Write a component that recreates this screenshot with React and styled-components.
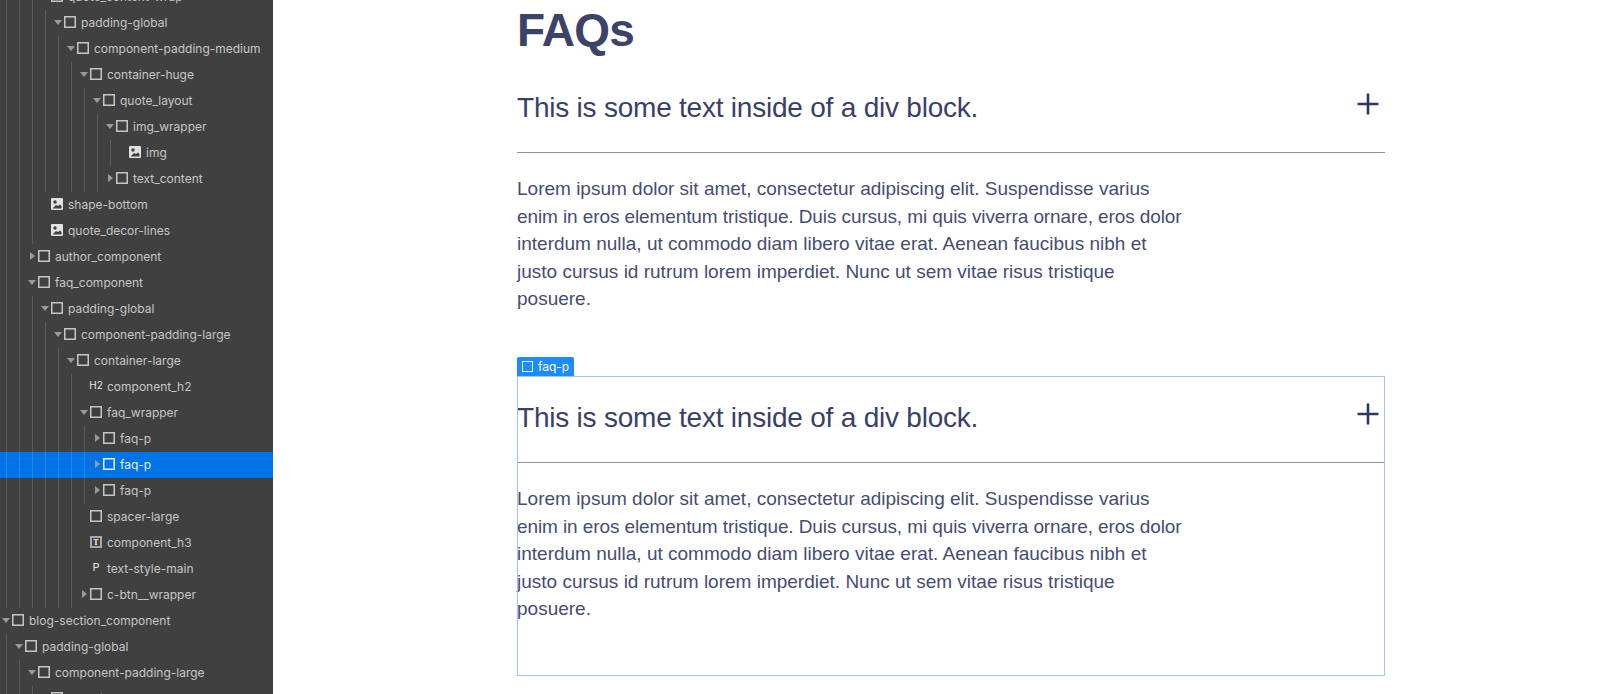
import React from 'react';
import styled, { createGlobalStyle } from 'styled-components';

const GlobalStyle = createGlobalStyle`
  html, body {
    margin: 0;
    height: 100%;
    overflow: hidden;
    background: #fff;
  }
`;

const Page = styled.div`
  display: flex;
  height: 694px;
  overflow: hidden;
`;

const Sidebar = styled.aside`
  width: 273px;
  flex-shrink: 0;
  background: #404040;
  overflow: hidden;
  font-family: Inter, "Liberation Sans", sans-serif;
  font-size: 12px;
  color: #c6c6c6;
`;

const Tree = styled.div`
  margin-top: -16px;
`;

const Group = styled.div`
  position: relative;

  &::after {
    content: '';
    position: absolute;
    top: 0;
    bottom: 0;
    left: ${(p) => 5.5 + p.$depth * 13}px;
    width: 1px;
    background: rgba(255, 255, 255, 0.14);
    z-index: 2;
  }
`;

const Row = styled.div`
  box-sizing: border-box;
  display: flex;
  align-items: center;
  height: 26px;
  padding-bottom: 2px;
  padding-left: ${(p) => p.$depth * 13}px;
  background: ${(p) => (p.$selected ? '#0073e6' : 'transparent')};
  color: ${(p) => (p.$selected ? '#e8f2ff' : 'inherit')};
  white-space: nowrap;
`;

const CaretSlot = styled.span`
  display: flex;
  align-items: center;
  justify-content: center;
  width: 12px;
  flex-shrink: 0;
`;

const Caret = styled.span`
  width: 0;
  height: 0;
  ${(p) =>
    p.$open
      ? `border-left: 4px solid transparent;
         border-right: 4px solid transparent;
         border-top: 5px solid #9a9a9a;`
      : `border-top: 4px solid transparent;
         border-bottom: 4px solid transparent;
         border-left: 5px solid #9a9a9a;`}
`;

const IconSlot = styled.span`
  display: flex;
  align-items: center;
  justify-content: center;
  width: 12px;
  height: 12px;
  margin-right: 5px;
  flex-shrink: 0;
`;

const TextMark = styled.span`
  box-sizing: border-box;
  display: flex;
  align-items: center;
  justify-content: center;
  width: 12px;
  height: 12px;
  border: 2px solid #a8a8a8;
  font-family: "Liberation Serif", serif;
  font-size: 8px;
  font-weight: 700;
  color: #f0f0f0;
`;

const TagMark = styled.span`
  font-size: ${(p) => p.$size}px;
  font-weight: 400;
  line-height: 1;
  margin-top: -2px;
  color: #e6e6e6;
`;

const Main = styled.main`
  flex: 1;
  padding-left: 244px;
  color: #343a68;
  font-family: "Liberation Sans", Arial, sans-serif;
`;

const Content = styled.div`
  width: 868px;
`;

const Heading = styled.h2`
  margin: 0;
  height: 66px;
  font-size: 46px;
  line-height: 61px;
  font-weight: 700;
  letter-spacing: -0.8px;
  color: #3c4268;
`;

const FaqItem = styled.div`
  position: relative;
  box-sizing: border-box;
  height: 300px;
  margin-bottom: 10px;
  ${(p) => p.$selected && 'outline: 1px solid #9cc4fd; outline-offset: -1px;'}
`;

const FaqHeader = styled.div`
  box-sizing: border-box;
  display: flex;
  justify-content: space-between;
  align-items: flex-start;
  height: 87px;
  padding-top: 24px;
  border-bottom: 1px solid #8f8fa6;
`;

const Question = styled.div`
  font-size: 28px;
  line-height: 36px;
  letter-spacing: -0.22px;
  color: #3a4068;
`;

const PlusIcon = styled.svg`
  width: 24px;
  height: 24px;
  margin: 2px 5px 0 0;
  color: #2f3566;
`;

const Answer = styled.p`
  margin: 0;
  padding-top: 22px;
  font-size: 19px;
  line-height: 27.5px;
  color: #464c74;
`;

const AnswerLine = styled.span`
  display: block;
  white-space: nowrap;
  letter-spacing: ${(p) => p.$tracking || 0}px;
`;

const SelectTag = styled.div`
  position: absolute;
  left: 0;
  top: -19px;
  display: flex;
  align-items: center;
  gap: 5px;
  box-sizing: border-box;
  height: 19px;
  padding: 0 5px;
  border-radius: 2px 2px 0 0;
  background: #1a8cff;
  color: #fff;
  font-family: Inter, "Liberation Sans", sans-serif;
  font-size: 12px;
`;

const TagBox = styled.span`
  box-sizing: border-box;
  width: 11px;
  height: 11px;
  border: 1px solid #fff;
`;

const BoxMark = () => (
  <svg width="12" height="12" viewBox="0 0 12 12">
    <rect x="0.75" y="0.75" width="10.5" height="10.5" fill="none" stroke="currentColor" strokeWidth="1.5" />
  </svg>
);

const ImageMark = () => (
  <svg width="12" height="12" viewBox="0 0 12 12">
    <rect width="12" height="12" rx="1" fill="#e2e2e2" />
    <circle cx="4" cy="4" r="1.7" fill="#404040" />
    <path d="M1.5 10.5 L5 7 L7 8 L9 6.5 L10.5 8 V10.5 Z" fill="#404040" />
  </svg>
);

const Plus = () => (
  <PlusIcon viewBox="0 0 24 24" fill="none" stroke="currentColor" strokeWidth="2.6">
    <path d="M12 1.5 V22.5 M1.5 12 H22.5" />
  </PlusIcon>
);

const tree = [
  { label: 'body', hidden: true, children: [
    { label: 'main', hidden: true, children: [
      { label: 'quote_component', hidden: true, children: [
        { label: 'quote_content-wrap', open: true, children: [
          { label: 'padding-global', open: true, children: [
            { label: 'component-padding-medium', open: true, children: [
              { label: 'container-huge', open: true, children: [
                { label: 'quote_layout', open: true, children: [
                  { label: 'img_wrapper', open: true, children: [
                    { label: 'img', icon: 'image' },
                  ] },
                  { label: 'text_content', closed: true },
                ] },
              ] },
            ] },
          ] },
        ] },
        { label: 'shape-bottom', icon: 'image' },
        { label: 'quote_decor-lines', icon: 'image' },
      ] },
      { label: 'author_component', closed: true },
      { label: 'faq_component', open: true, children: [
        { label: 'padding-global', open: true, children: [
          { label: 'component-padding-large', open: true, children: [
            { label: 'container-large', open: true, children: [
              { label: 'component_h2', icon: 'h2' },
              { label: 'faq_wrapper', open: true, children: [
                { label: 'faq-p', closed: true },
                { label: 'faq-p', closed: true, selected: true },
                { label: 'faq-p', closed: true },
              ] },
              { label: 'spacer-large' },
              { label: 'component_h3', icon: 'text' },
              { label: 'text-style-main', icon: 'p' },
              { label: 'c-btn__wrapper', closed: true },
            ] },
          ] },
        ] },
      ] },
    ] },
  ] },
  { label: 'blog-section_component', open: true, children: [
    { label: 'padding-global', open: true, children: [
      { label: 'component-padding-large', open: true, children: [
        { label: 'container-large', open: true, children: [] },
      ] },
    ] },
  ] },
];

const renderIcon = (icon) => {
  if (icon === 'image') return <ImageMark />;
  if (icon === 'text') return <TextMark>T</TextMark>;
  if (icon === 'h2') return <TagMark $size={10}>H2</TagMark>;
  if (icon === 'p') return <TagMark $size={11}>P</TagMark>;
  return <BoxMark />;
};

function TreeNode({ node, depth }) {
  const children = node.children || [];
  return (
    <>
      {!node.hidden && (
        <Row $depth={depth} $selected={node.selected}>
          <CaretSlot>
            {node.open && <Caret $open />}
            {node.closed && <Caret />}
          </CaretSlot>
          <IconSlot>{renderIcon(node.icon)}</IconSlot>
          <span>{node.label}</span>
        </Row>
      )}
      {children.length > 0 && (
        <Group $depth={depth}>
          {children.map((child, i) => (
            <TreeNode key={i} node={child} depth={depth + 1} />
          ))}
        </Group>
      )}
    </>
  );
}

const answerLines = [
  { text: 'Lorem ipsum dolor sit amet, consectetur adipiscing elit. Suspendisse varius' },
  { text: 'enim in eros elementum tristique. Duis cursus, mi quis viverra ornare, eros dolor', tracking: -0.1 },
  { text: 'interdum nulla, ut commodo diam libero vitae erat. Aenean faucibus nibh et' },
  { text: 'justo cursus id rutrum lorem imperdiet. Nunc ut sem vitae risus tristique' },
  { text: 'posuere.' },
];

function Faq({ selected }) {
  return (
    <FaqItem $selected={selected}>
      {selected && (
        <SelectTag>
          <TagBox />
          faq-p
        </SelectTag>
      )}
      <FaqHeader>
        <Question>This is some text inside of a div block.</Question>
        <Plus />
      </FaqHeader>
      <Answer>
        {answerLines.map((line, i) => (
          <AnswerLine key={i} $tracking={line.tracking}>{line.text}</AnswerLine>
        ))}
      </Answer>
    </FaqItem>
  );
}

export default function App() {
  return (
    <>
      <GlobalStyle />
      <Page>
        <Sidebar>
          <Tree>
            {tree.map((node, i) => (
              <TreeNode key={i} node={node} depth={0} />
            ))}
          </Tree>
        </Sidebar>
        <Main>
          <Content>
            <Heading>FAQs</Heading>
            <Faq />
            <Faq selected />
            <Faq />
          </Content>
        </Main>
      </Page>
    </>
  );
}
